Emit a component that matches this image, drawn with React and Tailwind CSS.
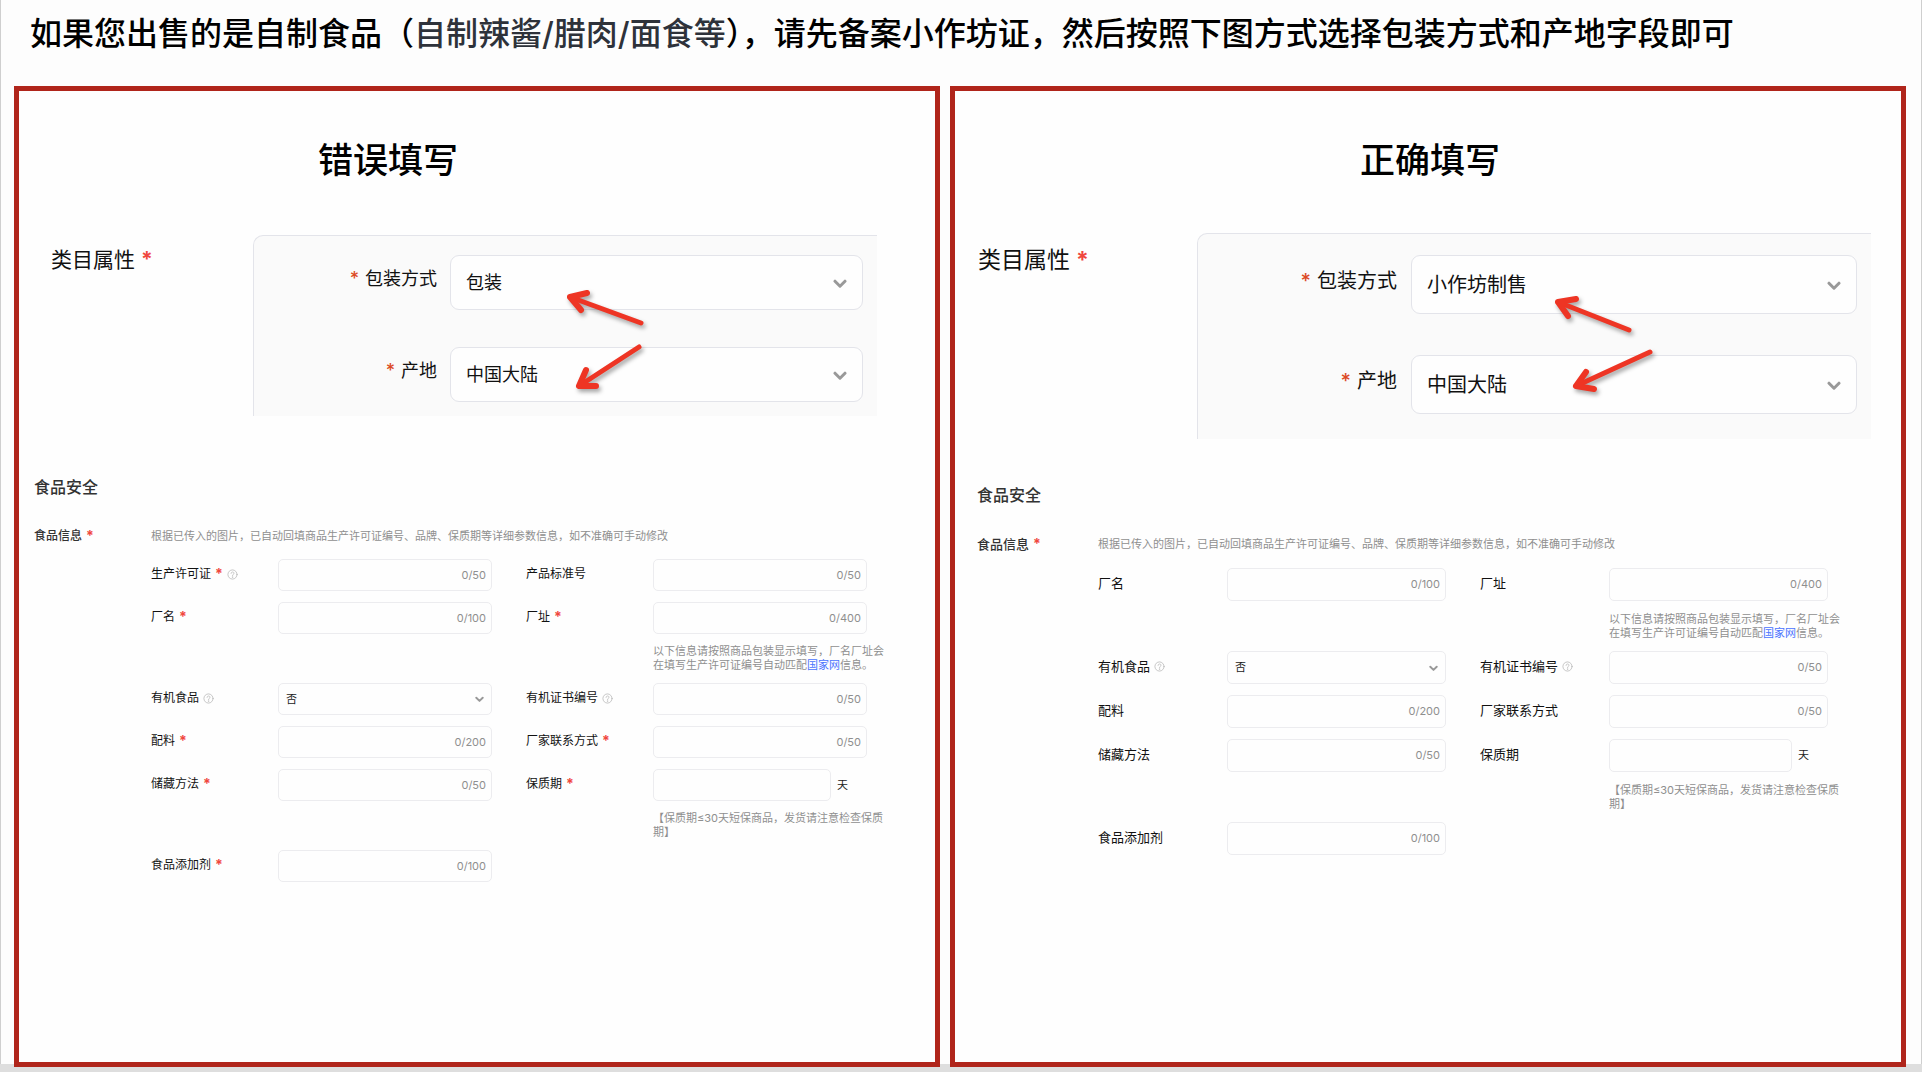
import { useId } from 'react';

const FOOD_HINT = '根据已传入的图片，已自动回填商品生产许可证编号、品牌、保质期等详细参数信息，如不准确可手动修改';

const wrongExample = {
  title: '错误填写',
  packaging: '包装',
  rows: [
    [
      { label: '生产许可证', required: true, tip: true, count: '0/50' },
      { label: '产品标准号', count: '0/50' },
    ],
    [
      { label: '厂名', required: true, count: '0/100' },
      { label: '厂址', required: true, count: '0/400', help: 'address' },
    ],
    [
      { label: '有机食品', tip: true, select: true },
      { label: '有机证书编号', tip: true, count: '0/50' },
    ],
    [
      { label: '配料', required: true, count: '0/200' },
      { label: '厂家联系方式', required: true, count: '0/50' },
    ],
    [
      { label: '储藏方法', required: true, count: '0/50' },
      { label: '保质期', required: true, unit: '天', help: 'shelfLife' },
    ],
    [{ label: '食品添加剂', required: true, count: '0/100' }],
  ],
  arrows: [
    { shaft: 'M316 61 L387 87', head: 'M333 57 L316 61 L327 74' },
    { shaft: 'M325 150 L385 111', head: 'M332 134 L325 150 L342 150' },
  ],
  cls: {
    title: 'pl-[299px] mb-[53px]',
    category: 'pl-[32px] pr-[58px]',
    categoryLabel: 'w-[202px] pt-[11px] text-[21px]',
    box: 'pt-[19px] pb-[14px] gap-[37px]',
    boxLabel: 'w-[183px] mr-[13px] text-[18px]',
    boxSelect: 'h-[55px] text-[18px]',
    food: 'mt-[59px] pl-[15px] pr-[68px]',
    foodLabel: 'w-[117px] text-[12px]',
    form: 'mt-[14px]',
    label: 'w-[127px] text-[12px]',
    control: 'h-[32px]',
    help: 'mt-[10px] -mr-5',
  },
};

const rightExample = {
  title: '正确填写',
  packaging: '小作坊制售',
  rows: [
    [
      { label: '厂名', count: '0/100' },
      { label: '厂址', count: '0/400', help: 'address' },
    ],
    [
      { label: '有机食品', tip: true, select: true },
      { label: '有机证书编号', tip: true, count: '0/50' },
    ],
    [
      { label: '配料', count: '0/200' },
      { label: '厂家联系方式', count: '0/50' },
    ],
    [
      { label: '储藏方法', count: '0/50' },
      { label: '保质期', unit: '天', help: 'shelfLife' },
    ],
    [{ label: '食品添加剂', count: '0/100' }],
  ],
  arrows: [
    { shaft: 'M360 68 L431 96', head: 'M378 65 L360 68 L370 82' },
    { shaft: 'M378 152 L452 118', head: 'M388 138 L378 152 L396 155' },
  ],
  cls: {
    title: 'pl-[405px] mb-[51px]',
    category: 'pl-[23px] pr-[30px]',
    categoryLabel: 'w-[219px] pt-[13px] text-[23px]',
    box: 'pt-[21px] pb-[25px] gap-[41px]',
    boxLabel: 'w-[199px] mr-[14px] text-[20px]',
    boxSelect: 'h-[59px] text-[20px]',
    food: 'mt-[44px] pl-[22px] pr-[73px]',
    foodLabel: 'w-[121px] text-[13px]',
    form: 'mt-[15px]',
    label: 'w-[129px] text-[13px]',
    control: 'h-[33px]',
    help: 'mt-[11px] -mr-4',
  },
};

function Chevron({ className }) {
  return (
    <svg viewBox="0 0 14 10" fill="none" stroke="#999" strokeWidth="3" strokeLinecap="round" strokeLinejoin="round" className={className}>
      <path d="M2 2.2 L7 7.2 L12 2.2" />
    </svg>
  );
}

function TipIcon() {
  return (
    <svg viewBox="0 0 12 12" fill="none" stroke="#b4b4b4" strokeWidth="0.8" strokeLinecap="round" className="w-[11px] h-[11px]">
      <circle cx="6" cy="6" r="5" />
      <path d="M4.4 4.8 C4.4 2.7 7.6 2.7 7.6 4.7 C7.6 5.8 6 5.9 6 7.2" />
      <circle cx="6" cy="8.8" r="0.2" />
    </svg>
  );
}

function Arrows({ arrows }) {
  return (
    <svg width="500" height="180" fill="none" stroke="#ee3524" strokeLinecap="round" strokeLinejoin="round" className="absolute left-0 top-0 pointer-events-none drop-shadow-[2px_3px_2px_rgba(0,0,0,0.35)]">
      {arrows.map((a) => (
        <g key={a.shaft}>
          <path d={a.shaft} strokeWidth="5" />
          <path d={a.head} strokeWidth="6" />
        </g>
      ))}
    </svg>
  );
}

function CategorySelect({ label, value, cls }) {
  const id = useId();
  return (
    <div className="flex items-center">
      <label htmlFor={id} className={`flex shrink-0 justify-end gap-[6px] pb-[7px] leading-[28px] ${cls.boxLabel}`}>
        <span className="font-medium text-[#dc4a26]">*</span>
        {label}
      </label>
      <div className="relative flex-1">
        <select id={id} defaultValue={value} className={`block w-full appearance-none rounded-[9px] border border-[#e3e4ea] bg-[#fefefe] px-[15px] text-[#111] ${cls.boxSelect}`}>
          <option>{value}</option>
        </select>
        <Chevron className="absolute right-[16px] top-1/2 -mt-[4px] w-[14px] h-[10px] pointer-events-none" />
      </div>
    </div>
  );
}

function HelpText({ type, className }) {
  return (
    <p className={`text-[11px] leading-[14px] text-[#8f8f8f] ${className}`}>
      {type === 'address' ? (
        <>
          以下信息请按照商品包装显示填写，厂名厂址会在填写生产许可证编号自动匹配
          <a href="#" className="text-[#4a74ff]">国家网</a>
          信息。
        </>
      ) : (
        '【保质期≤30天短保商品，发货请注意检查保质期】'
      )}
    </p>
  );
}

function Field({ field, cls }) {
  const id = useId();
  return (
    <div className="flex items-start">
      <label htmlFor={id} className={`flex shrink-0 items-center gap-[4px] pt-[6px] leading-[18px] text-[#111] ${cls.label}`}>
        {field.label}
        {field.required && <span className="text-[14px] font-bold text-[#f0473e]">*</span>}
        {field.tip && <TipIcon />}
      </label>
      <div className="min-w-0 flex-1">
        {field.select ? (
          <div className="relative">
            <select id={id} className={`block w-full appearance-none rounded-[5px] border border-[#ececef] bg-[#fefefe] px-[7px] text-[11px] text-[#222] ${cls.control}`}>
              <option>否</option>
              <option>是</option>
            </select>
            <Chevron className="absolute right-[8px] top-1/2 -mt-[3px] w-[9px] h-[7px] pointer-events-none" />
          </div>
        ) : (
          <div className="flex items-center gap-[6px]">
            <div className={`flex min-w-0 flex-1 items-center rounded-[5px] border border-[#ececef] bg-[#fefefe] px-[5px] ${cls.control}`}>
              <input id={id} type="text" className="min-w-0 flex-1 bg-transparent text-[11px] outline-none" />
              {field.count && <span className="text-[11px] text-[#8f8f8f]">{field.count}</span>}
            </div>
            {field.unit && <span className="w-[30px] text-[11px] text-[#222]">{field.unit}</span>}
          </div>
        )}
        {field.help && <HelpText type={field.help} className={cls.help} />}
      </div>
    </div>
  );
}

function Example({ title, packaging, rows, arrows, cls }) {
  return (
    <section className="border-[5px] border-[#b0251b] bg-[#fefefe] pt-[47px]">
      <h2 className={`text-[35px] leading-[44px] font-medium text-black ${cls.title}`}>{title}</h2>

      <div className={`flex items-start ${cls.category}`}>
        <div className={`flex shrink-0 gap-[6px] leading-[28px] text-[#111] ${cls.categoryLabel}`}>
          类目属性
          <span className="font-bold text-[#f0473e]">*</span>
        </div>
        <div className={`relative flex flex-1 flex-col rounded-tl-[10px] border-t border-l border-[#e3e4ea] bg-[#fafafa] pr-[14px] text-[#111] ${cls.box}`}>
          <CategorySelect label="包装方式" value={packaging} cls={cls} />
          <CategorySelect label="产地" value="中国大陆" cls={cls} />
          <Arrows arrows={arrows} />
        </div>
      </div>

      <div className={cls.food}>
        <h3 className="text-[16px] leading-[24px] font-medium text-[#333]">食品安全</h3>
        <div className="mt-[28px] flex items-start">
          <div className={`flex shrink-0 gap-[4px] leading-[18px] font-medium text-[#333] ${cls.foodLabel}`}>
            食品信息
            <span className="text-[14px] font-bold text-[#f0473e]">*</span>
          </div>
          <div className="flex-1">
            <p className="text-[11px] leading-[18px] text-[#8f8f8f]">{FOOD_HINT}</p>
            <div className={`flex flex-col gap-[11px] ${cls.form}`}>
              {rows.map((row) => (
                <div key={row[0].label} className="grid grid-cols-2 gap-[34px]">
                  {row.map((field) => (
                    <Field key={field.label} field={field} cls={cls} />
                  ))}
                </div>
              ))}
            </div>
          </div>
        </div>
      </div>
    </section>
  );
}

export default function App() {
  return (
    <div className="min-h-screen bg-[#dedede] font-['Inter','Noto_Sans_CJK_SC',sans-serif]">
      <main className="flex min-h-[calc(100vh-8px)] flex-col border-x border-[#cfcfcf] bg-[#fdfdfd]">
        <h1 className="pt-[14px] pb-[32px] pl-[29px] text-[32px] leading-[40px] font-medium text-black">
          如果您出售的是自制食品（<span className="text-[#2e323a]">自制辣酱/腊肉/面食等</span>），请先备案小作坊证，然后按照下图方式选择包装方式和产地字段即可
        </h1>
        <div className="-mb-[3px] grid flex-1 grid-cols-[926fr_956fr] gap-[10px] pl-[13px] pr-[15px]">
          <Example {...wrongExample} />
          <Example {...rightExample} />
        </div>
      </main>
    </div>
  );
}
